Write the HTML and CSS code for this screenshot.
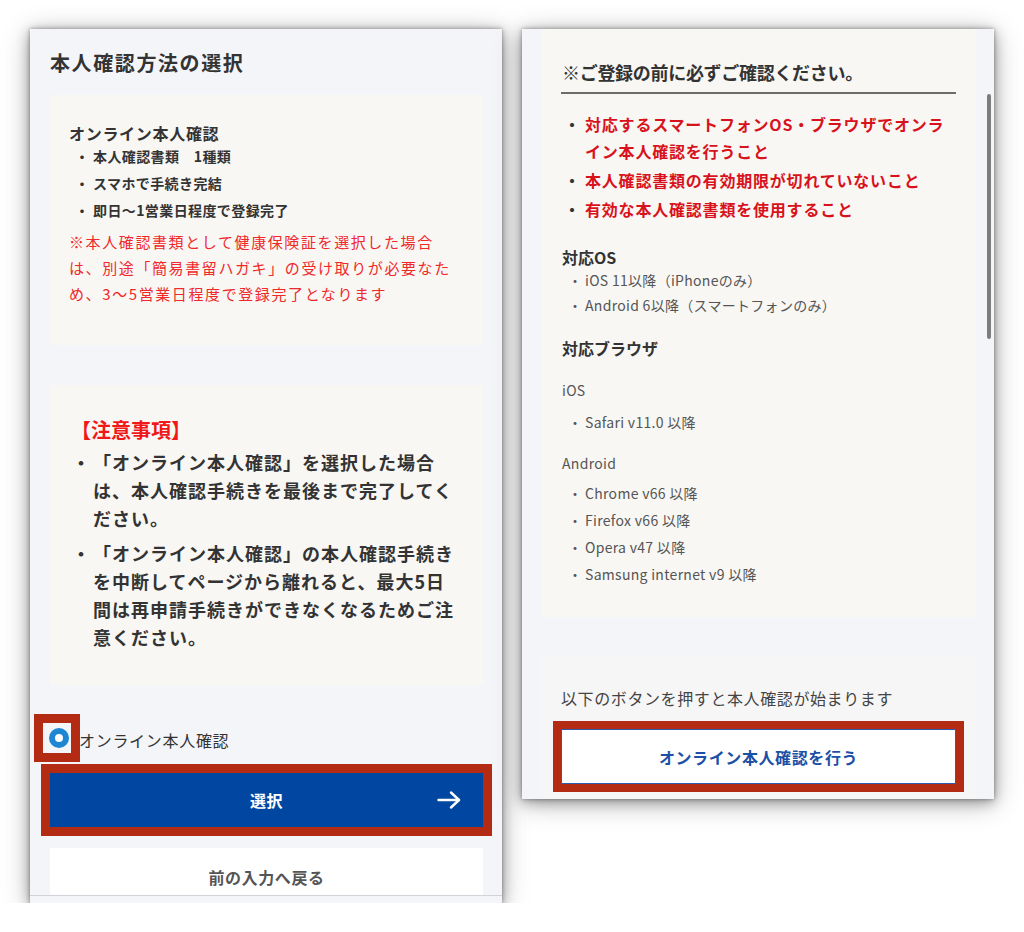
FILE: index.html
```html
<!DOCTYPE html>
<html lang="ja">
<head>
<meta charset="utf-8">
<title>本人確認方法の選択</title>
<link rel="stylesheet" href="styles.css">
</head>
<body>
<div class="stage">
  <section class="panel panel-left">
    <div class="left-scroll">
      <h1 class="title">本人確認方法の選択</h1>

      <div class="box box-method">
        <h2 class="method-title">オンライン本人確認</h2>
        <ul class="method-list">
          <li><span class="dot">・</span><span>本人確認書類　1種類</span></li>
          <li><span class="dot">・</span><span>スマホで手続き完結</span></li>
          <li><span class="dot">・</span><span>即日〜1営業日程度で登録完了</span></li>
        </ul>
        <p class="method-note">※本人確認書類として健康保険証を選択した場合<br>は、別途「簡易書留ハガキ」の受け取りが必要なた<br>め、3〜5営業日程度で登録完了となります</p>
      </div>

      <div class="box box-caution">
        <h2 class="caution-title">【注意事項】</h2>
        <ul class="caution-list">
          <li><span class="dot">・</span><span>「オンライン本人確認」を選択した場合<br>は、本人確認手続きを最後まで完了してく<br>ださい。</span></li>
          <li><span class="dot">・</span><span>「オンライン本人確認」の本人確認手続き<br>を中断してページから離れると、最大5日<br>間は再申請手続きができなくなるためご注<br>意ください。</span></li>
        </ul>
      </div>

      <label class="radio-row">
        <span class="radio-wrap"><span class="radio"></span></span>
        <span class="radio-label">オンライン本人確認</span>
      </label>

      <button class="btn-select" type="button">
        <span></span>
        <span class="btn-select-text">選択</span>
        <span class="btn-arrow">
          <svg width="24" height="18" viewBox="0 0 24 18" fill="none" stroke="#fff" stroke-width="2.4" stroke-linecap="round" stroke-linejoin="round"><path d="M1.5 9H22"/><path d="M14 1.5L22 9L14 16.5"/></svg>
        </span>
      </button>

      <button class="btn-back" type="button">前の入力へ戻る</button>
    </div>
    <div class="left-foot"></div>
  </section>

  <section class="panel panel-right">
    <div class="box box-check">
      <h2 class="check-title">※ご登録の前に必ずご確認ください。</h2>
      <hr class="check-rule">
      <ul class="red-list">
        <li><span class="dot">・</span><span>対応するスマートフォンOS・ブラウザでオンラ<br>イン本人確認を行うこと</span></li>
        <li><span class="dot">・</span><span>本人確認書類の有効期限が切れていないこと</span></li>
        <li><span class="dot">・</span><span>有効な本人確認書類を使用すること</span></li>
      </ul>

      <h3 class="sub-title sub-os">対応OS</h3>
      <ul class="gray-list os-list">
        <li><span class="dot">・</span><span>iOS 11以降（iPhoneのみ）</span></li>
        <li><span class="dot">・</span><span>Android 6以降（スマートフォンのみ）</span></li>
      </ul>

      <h3 class="sub-title sub-browser">対応ブラウザ</h3>
      <p class="platform platform-ios">iOS</p>
      <ul class="gray-list ios-list">
        <li><span class="dot">・</span><span>Safari v11.0 以降</span></li>
      </ul>
      <p class="platform platform-android">Android</p>
      <ul class="gray-list android-list">
        <li><span class="dot">・</span><span>Chrome v66 以降</span></li>
        <li><span class="dot">・</span><span>Firefox v66 以降</span></li>
        <li><span class="dot">・</span><span>Opera v47 以降</span></li>
        <li><span class="dot">・</span><span>Samsung internet v9 以降</span></li>
      </ul>
    </div>

    <div class="box box-start">
      <p class="start-text">以下のボタンを押すと本人確認が始まります</p>
      <button class="btn-start" type="button">オンライン本人確認を行う</button>
    </div>

    <div class="scrollbar"></div>
  </section>
</div>
</body>
</html>
```

FILE: styles.css
```css
* { box-sizing: border-box; }

html, body {
  margin: 0;
  padding: 0;
  background: #ffffff;
}

body {
  font-family: "Noto Sans CJK JP", "Noto Sans", sans-serif;
  color: #333333;
}

ul { list-style: none; margin: 0; padding: 0; }
p, h1, h2, h3 { margin: 0; }

.stage {
  display: flex;
  align-items: flex-start;
  gap: 20px;
  padding: 29px 0 0 30px;
}

.panel {
  width: 472px;
  background: #f4f5f9;
  box-shadow: 0 0 4px rgba(0,0,0,0.35), 0 3px 12px rgba(0,0,0,0.3), 0 4px 26px rgba(0,0,0,0.28);
}

/* ---------- left panel ---------- */
.panel-left {
  height: 874px;
  display: flex;
  flex-direction: column;
}

.left-scroll {
  flex: 1;
  overflow: hidden;
  padding: 20px 19px 0 20px;
}

.left-foot {
  height: 8px;
  border-top: 1px solid #d2d3d8;
  background: #f4f5f9;
}

.title {
  font-size: 20px;
  font-weight: 700;
  line-height: 28px;
  letter-spacing: 1.6px;
  color: #333;
}

.box { background: #f8f7f4; }

.box-method {
  margin-top: 18px;
  padding: 28px 19px 38px 19px;
}

.method-title {
  font-size: 16px;
  font-weight: 700;
  line-height: 20px;
  letter-spacing: 0.7px;
  color: #333;
}

.method-list li {
  display: flex;
  font-size: 14px;
  font-weight: 700;
  line-height: 27px;
  letter-spacing: 0.4px;
  color: #333;
  padding-left: 6px;
}
.method-list .dot { width: 18px; flex: none; }

.method-note {
  margin-top: 5px;
  font-size: 15px;
  line-height: 26px;
  letter-spacing: 1.6px;
  color: #f0282a;
  white-space: nowrap;
}

.box-caution {
  margin-top: 40px;
  padding: 31px 22px 34px 22px;
}

.caution-title {
  font-size: 20px;
  font-weight: 700;
  line-height: 28px;
  margin-left: -1px;
  color: #f01818;
}

.caution-list { margin-top: 4px; }
.caution-list li {
  display: flex;
  font-size: 18px;
  font-weight: 700;
  line-height: 28px;
  letter-spacing: 1px;
  color: #333;
  white-space: nowrap;
}
.caution-list li + li { margin-top: 7px; }
.caution-list .dot { width: 21px; flex: none; letter-spacing: 0; }

.radio-row {
  display: flex;
  align-items: center;
  margin-top: 38px;
  margin-left: -7px;
}

.radio-wrap {
  display: block;
  width: 28px;
  height: 30px;
  padding: 5px 2px 5px 6px;
  outline: 9px solid #b32b12;
}

.radio {
  display: block;
  width: 20px;
  height: 20px;
  border-radius: 50%;
  border: 6px solid #1d87d3;
  background: #ffffff;
}

.radio-label {
  margin-left: 8px;
  padding-top: 3px;
  font-size: 16px;
  line-height: 24px;
  letter-spacing: 0.7px;
  color: #333;
}

.btn-select {
  display: grid;
  grid-template-columns: 1fr auto 1fr;
  align-items: center;
  width: 100%;
  height: 54px;
  margin-top: 20px;
  padding: 0 22px;
  border: 0;
  background: #0147a1;
  color: #ffffff;
  font-family: inherit;
  font-size: 16px;
  font-weight: 700;
  letter-spacing: 0.6px;
  outline: 9px solid #b32b12;
}
.btn-arrow {
  justify-self: end;
  display: flex;
}

.btn-back {
  display: block;
  width: 100%;
  height: 58px;
  margin-top: 21px;
  border: 0;
  background: #ffffff;
  color: #555;
  font-family: inherit;
  font-size: 16px;
  font-weight: 700;
  letter-spacing: 0.6px;
}

/* ---------- right panel ---------- */
.panel-right {
  position: relative;
  height: 770px;
  overflow: hidden;
  padding: 0 18px 0 19px;
}

.box-check {
  padding: 30px 20px 29px 21px;
}

.check-title {
  font-size: 18px;
  font-weight: 700;
  line-height: 26px;
  letter-spacing: -0.3px;
  color: #333;
}

.check-rule {
  margin: 7px 0 0 -1px;
  border: 0;
  border-top: 2px solid #6c6c6c;
  height: 0;
}

.red-list { margin-top: 17px; }
.red-list li {
  display: flex;
  font-size: 16px;
  font-weight: 700;
  line-height: 27px;
  letter-spacing: 0.8px;
  color: #d8121c;
  white-space: nowrap;
}
.red-list li + li { margin-top: 2px; }
.red-list .dot { width: 23px; flex: none; padding-left: 2px; color: #333; letter-spacing: 0; }

.sub-title {
  font-size: 16px;
  font-weight: 700;
  line-height: 22px;
  color: #333;
}
.sub-os { margin-top: 23px; }
.sub-browser { margin-top: 19px; }

.gray-list li {
  display: flex;
  font-size: 14px;
  letter-spacing: 0.3px;
  color: #555;
}
.gray-list .dot { width: 23px; flex: none; padding-left: 6px; letter-spacing: 0; }
.os-list li { line-height: 25px; }
.ios-list { margin-top: 8px; }
.ios-list li { line-height: 26px; }
.android-list { margin-top: 6px; }
.android-list li { line-height: 27px; }

.platform {
  font-size: 14px;
  line-height: 22px;
  color: #555;
  letter-spacing: 0.3px;
}
.platform-ios { margin-top: 20px; }
.platform-android { margin-top: 17px; }

.box-start {
  margin-top: 40px;
  background: #f6f6f7;
  padding: 29px 20px 30px 20px;
}

.start-text {
  font-size: 16px;
  line-height: 24px;
  letter-spacing: 0.6px;
  color: #444;
}

.btn-start {
  display: block;
  width: 100%;
  height: 55px;
  margin-top: 19px;
  background: #ffffff;
  border: 1px solid #2b5cb0;
  color: #1c4fa6;
  font-family: inherit;
  font-size: 16px;
  font-weight: 700;
  letter-spacing: 0.6px;
  outline: 8px solid #b32b12;
  outline-offset: 0;
}

.scrollbar {
  position: absolute;
  top: 65px;
  right: 3px;
  width: 4px;
  height: 245px;
  border-radius: 2px;
  background: #7d7d7d;
}
```
